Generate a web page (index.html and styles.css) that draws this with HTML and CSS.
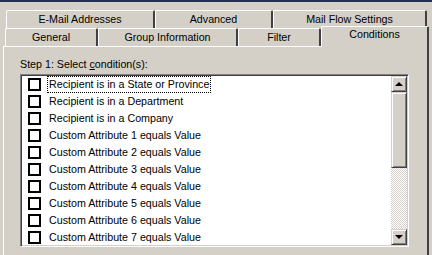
FILE: index.html
```html
<!DOCTYPE html>
<html lang="en">
  <head>
    <meta charset="UTF-8" />
    <title>Conditions</title>
    <link rel="stylesheet" href="styles.css">
  </head>

  <body>
    <div class="top-edge"></div>

    <div class="tabs">
      <div class="tab-row back">
        <div class="tab tab-email">E-Mail Addresses</div>
        <div class="tab tab-advanced">Advanced</div>
        <div class="tab tab-flow">Mail Flow Settings</div>
      </div>
      <div class="tab-row front">
        <div class="tab tab-general">General</div>
        <div class="tab tab-group">Group Information</div>
        <div class="tab tab-filter">Filter</div>
        <div class="tab tab-conditions selected">Conditions</div>
      </div>
    </div>

    <div class="panel">
      <div class="step-label">Step 1: Select <u>c</u>ondition(s):</div>
      <div class="listbox">
        <ul class="items">
          <li class="item focused"><span class="check"></span><span class="text">Recipient is in a State or Province</span></li>
          <li class="item"><span class="check"></span><span class="text">Recipient is in a Department</span></li>
          <li class="item"><span class="check"></span><span class="text">Recipient is in a Company</span></li>
          <li class="item"><span class="check"></span><span class="text">Custom Attribute 1 equals Value</span></li>
          <li class="item"><span class="check"></span><span class="text">Custom Attribute 2 equals Value</span></li>
          <li class="item"><span class="check"></span><span class="text">Custom Attribute 3 equals Value</span></li>
          <li class="item"><span class="check"></span><span class="text">Custom Attribute 4 equals Value</span></li>
          <li class="item"><span class="check"></span><span class="text">Custom Attribute 5 equals Value</span></li>
          <li class="item"><span class="check"></span><span class="text">Custom Attribute 6 equals Value</span></li>
          <li class="item"><span class="check"></span><span class="text">Custom Attribute 7 equals Value</span></li>
        </ul>
        <div class="scrollbar">
          <div class="sb-button"><span class="arrow up"></span></div>
          <div class="sb-thumb"></div>
          <div class="sb-track"></div>
          <div class="sb-button"><span class="arrow down"></span></div>
        </div>
      </div>
    </div>
  </body>
</html>
```

FILE: styles.css
```css
html,
body {
  height: 255px;
  overflow: hidden;
}

body {
  margin: 0;
  background: #d4d0c8;
  font: 10.7px "Liberation Sans", Arial, sans-serif;
  color: #000;
}

.top-edge {
  height: 2px;
  background: #243052;
}

/* 两排标签页 */
.tabs {
  margin-top: 8px;
}

.tab-row {
  display: flex;
  align-items: flex-end;
  height: 18px;
}

.back {
  padding-left: 6px;
}

.front {
  padding-left: 5px;
}

.tab {
  box-sizing: border-box;
  height: 18px;
  border-top: 1px solid #fff;
  border-left: 1px solid #fff;
  border-right: 2px solid #404040;
  border-top-left-radius: 2px;
  border-top-right-radius: 2px;
  text-align: center;
  line-height: 17px;
  white-space: nowrap;
}

.tab-email { width: 149px; }
.tab-advanced { width: 118px; }
.tab-flow { width: 154px; }
.tab-general { width: 93px; }
.tab-group { width: 140px; }
.tab-filter { width: 83px; }

.tab-conditions {
  width: 108px;
}

.selected {
  position: relative;
  z-index: 1;
  height: 21px;
  margin-bottom: -1px;
  background: #d4d0c8;
  line-height: 15px;
}

/* 标签页主体 */
.panel {
  margin-left: 3px;
  width: 426px;
  height: 209px;
  box-sizing: border-box;
  border-top: 1px solid #fff;
  border-left: 1px solid #fff;
  border-right: 2px solid #404040;
  padding: 11px 0 0 16px;
}

.step-label {
  line-height: 13px;
  height: 13px;
}

.listbox {
  margin-top: 3px;
  width: 389px;
  height: 173px;
  box-sizing: border-box;
  border: 1px solid;
  border-color: #808080 #fff #fff #808080;
  display: flex;
  background: #fff;
  box-shadow: inset 1px 1px 0 #404040, inset -1px -1px 0 #d4d0c8;
  padding: 1px;
}

.items {
  list-style: none;
  margin: 0;
  padding: 0;
  flex: 1;
  overflow: hidden;
}

.item {
  display: flex;
  align-items: center;
  height: 17px;
  padding-left: 6px;
}

.check {
  box-sizing: border-box;
  width: 13px;
  height: 13px;
  border: 2px solid #000;
  background: #fff;
  margin-right: 6px;
  flex: none;
}

.text {
  padding: 0 1px;
  line-height: 15px;
  border: 1px dotted transparent;
}

.focused .text {
  border-color: #000;
}

/* 滚动条 */
.scrollbar {
  width: 16px;
  display: flex;
  flex-direction: column;
}

.sb-button,
.sb-thumb {
  box-sizing: border-box;
  background: #d4d0c8;
  border: 1px solid;
  border-color: #d4d0c8 #404040 #404040 #d4d0c8;
  box-shadow: inset 1px 1px 0 #fff, inset -1px -1px 0 #808080;
}

.sb-button {
  height: 16px;
  display: flex;
  align-items: center;
  justify-content: center;
}

.sb-thumb {
  height: 76px;
}

.sb-track {
  flex: 1;
  background-color: #fff;
  background-image:
    linear-gradient(45deg, #d4d0c8 25%, transparent 25%, transparent 75%, #d4d0c8 75%),
    linear-gradient(45deg, #d4d0c8 25%, transparent 25%, transparent 75%, #d4d0c8 75%);
  background-size: 2px 2px;
  background-position: 0 0, 1px 1px;
}

.arrow {
  width: 0;
  height: 0;
  border-left: 4px solid transparent;
  border-right: 4px solid transparent;
}

.arrow.up {
  border-bottom: 4px solid #000;
}

.arrow.down {
  border-top: 4px solid #000;
}
```
